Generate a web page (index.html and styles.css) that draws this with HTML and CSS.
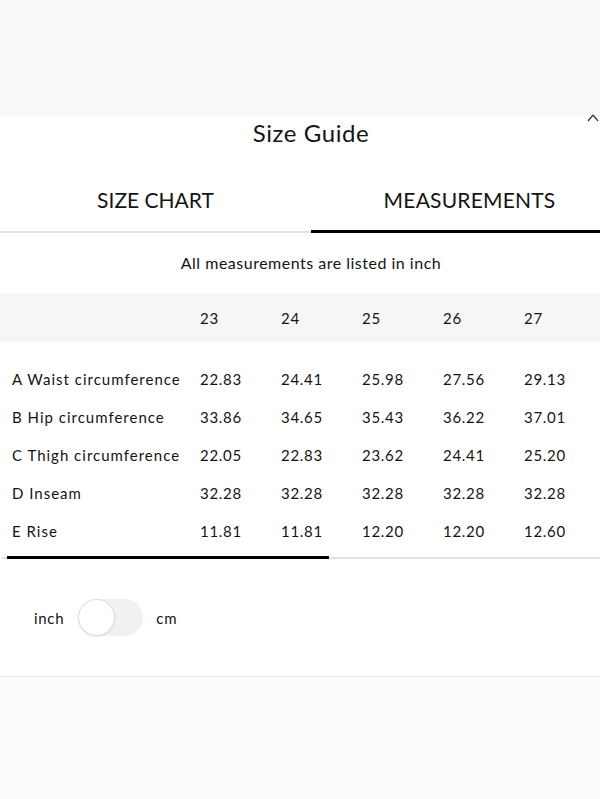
FILE: index.html
```html
<!DOCTYPE html>
<html>
<head>
<meta charset="utf-8">
<link rel="stylesheet" href="styles.css">
</head>
<body>
<div class="backdrop"></div>
<div class="modal">
  <svg class="close" width="14" height="10" viewBox="0 0 14 10"><path d="M2 9 L7 3 M7 3 L12 9" stroke="#333" stroke-width="1.2" fill="none"/></svg>
  <h1 class="title">Size Guide</h1>
  <div class="tabs">
    <div class="tab">SIZE CHART</div>
    <div class="tab active">MEASUREMENTS</div>
  </div>
  <p class="note">All measurements are listed in inch</p>
  <div class="table">
    <div class="row head">
      <div class="label"></div><div>23</div><div>24</div><div>25</div><div>26</div><div>27</div>
    </div>
    <div class="body">
      <div class="row"><div class="label">A Waist circumference</div><div>22.83</div><div>24.41</div><div>25.98</div><div>27.56</div><div>29.13</div></div>
      <div class="row"><div class="label">B Hip circumference</div><div>33.86</div><div>34.65</div><div>35.43</div><div>36.22</div><div>37.01</div></div>
      <div class="row"><div class="label">C Thigh circumference</div><div>22.05</div><div>22.83</div><div>23.62</div><div>24.41</div><div>25.20</div></div>
      <div class="row"><div class="label">D Inseam</div><div>32.28</div><div>32.28</div><div>32.28</div><div>32.28</div><div>32.28</div></div>
      <div class="row"><div class="label">E Rise</div><div>11.81</div><div>11.81</div><div>12.20</div><div>12.20</div><div>12.60</div></div>
    </div>
  </div>
  <div class="scroll"><div class="thumb"></div></div>
  <div class="units">
    <span>inch</span>
    <div class="switch"><div class="knob"></div></div>
    <span>cm</span>
  </div>
</div>
<div class="below"></div>
</body>
</html>
```
FILE: styles.css
```css
html, body {
  margin: 0;
  padding: 0;
}
body {
  width: 600px;
  height: 799px;
  overflow: hidden;
  background: #fcfcfc;
  font-family: Lato, "Noto Sans", sans-serif;
  color: #141414;
}
.backdrop {
  height: 116px;
  background: #f9f9f9;
}
.modal {
  position: relative;
  width: 622px;
  background: #fff;
  border-bottom: 1px solid #e4e4e4;
}
.close {
  position: absolute;
  right: 22px;
  top: -4px;
}
.title {
  margin: 0;
  text-align: center;
  font-weight: 400;
  font-size: 24px;
  line-height: 34px;
  height: 34px;
  letter-spacing: 0.6px;
}
.tabs {
  display: grid;
  grid-template-columns: 311px 311px;
  margin-top: 22px;
}
.tab {
  display: flex;
  align-items: center;
  justify-content: center;
  font-size: 21px;
  letter-spacing: 0;
  height: 55px;
  padding-bottom: 4px;
  border-bottom: 2px solid #e2e2e2;
}
.tab.active {
  letter-spacing: 0.2px;
  padding-bottom: 3px;
  border-bottom: 3px solid #000;
  padding-left: 6px;
}
.note {
  margin: 0;
  text-align: center;
  font-size: 16px;
  line-height: 60px;
  letter-spacing: 0.5px;
}
.table {
  font-size: 15px;
  letter-spacing: 0.7px;
}
.row {
  display: grid;
  grid-template-columns: 200px repeat(5, 81px);
  height: 38px;
  align-items: center;
}
.row.head {
  height: 49px;
  background: #f6f6f6;
}
.label {
  padding-left: 12px;
  letter-spacing: 1px;
}
.body {
  padding-top: 18px;
}
.scroll {
  position: relative;
  margin: 7px 0 0 2px;
  height: 2px;
  background: #e2e2e2;
}
.thumb {
  position: absolute;
  left: 5px;
  top: -1px;
  width: 322px;
  height: 3px;
  background: #000;
}
.units {
  display: flex;
  align-items: center;
  padding: 40px 0 40px 34px;
  font-size: 15px;
  letter-spacing: 0.7px;
}
.switch {
  width: 65px;
  height: 37px;
  border-radius: 19px;
  background: #f1f1f1;
  margin: 0 13px 0 14px;
  position: relative;
}
.knob {
  width: 35px;
  height: 35px;
  border-radius: 50%;
  background: #fff;
  border: 1px solid #dcdcdc;
  box-shadow: 0 1px 2px rgba(0,0,0,0.08);
}
.below {
  height: 130px;
}
```
